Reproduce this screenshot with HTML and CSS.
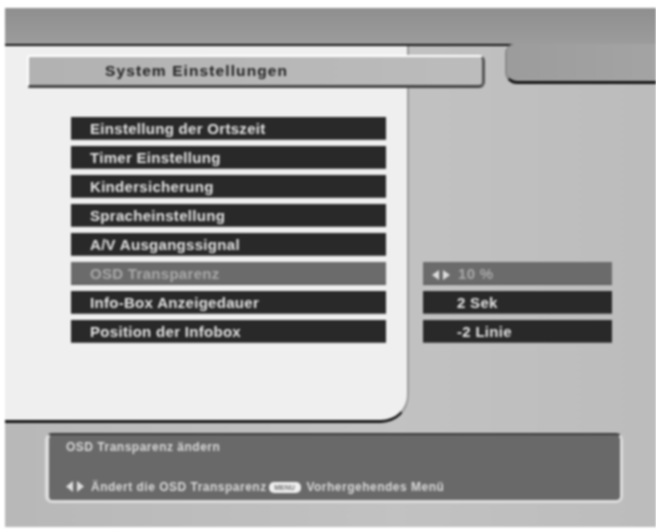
FILE: index.html
```html
<!DOCTYPE html>
<html lang="de">
<head>
<meta charset="utf-8">
<title>System Einstellungen</title>
<link rel="stylesheet" href="styles.css">
</head>
<body>
<div class="screen">
  <div class="top"></div>
  <div class="mid">
    <div class="panel">
      <div class="title"><span>System Einstellungen</span></div>
      <ul class="menu">
        <li class="row">Einstellung der Ortszeit</li>
        <li class="row">Timer Einstellung</li>
        <li class="row">Kindersicherung</li>
        <li class="row">Spracheinstellung</li>
        <li class="row">A/V Ausgangssignal</li>
        <li class="row sel">OSD Transparenz</li>
        <li class="row">Info-Box Anzeigedauer</li>
        <li class="row">Position der Infobox</li>
      </ul>
    </div>
    <div class="side">
      <div class="tab"></div>
      <ul class="vals">
        <li class="row val sel"><svg class="arrows" width="18" height="10" viewBox="0 0 18 10"><path d="M7 0v10L0 5zM11 0v10l7-5z"/></svg>10 %</li>
        <li class="row val"><span class="v">2 Sek</span></li>
        <li class="row val"><span class="v">-2 Linie</span></li>
      </ul>
    </div>
  </div>
  <div class="help">
    <p class="l1">OSD Transparenz ändern</p>
    <p class="l2"><svg class="arrows small" width="18" height="11" viewBox="0 0 18 11"><path d="M7 0v11L0 5.5zM11 0v11l7-5.5z"/></svg>Ändert die OSD Transparenz <span class="badge">MENU</span> Vorhergehendes Menü</p>
  </div>
</div>
</body>
</html>
```
FILE: styles.css
```css
* { box-sizing: border-box; }
html, body { margin: 0; padding: 0; background: #fff; }
body { width: 656px; height: 529px; overflow: hidden; font-family: "Liberation Sans", Arial, sans-serif; }
ul { list-style: none; margin: 0; padding: 0; }
p { margin: 0; }
.screen { margin: 8px 0 0 5px; width: 651px; height: 519px; background: linear-gradient(90deg, #b8b8b8, #c2c2c2 60%, #bcbcbc); filter: blur(.8px); display: flex; flex-direction: column; }
.top { height: 38px; background: linear-gradient(180deg, #8f8f8f, #9c9c9c); border-bottom: 2px solid #141414; flex: none; }
.mid { display: flex; height: 377px; flex: none; }
.panel { width: 404px; background: #efefef; border-bottom: 3px solid #141414; border-right: 2px solid #9a9a9a; border-bottom-right-radius: 28px; padding: 9px 0 0 22px; }
.title { width: 458px; height: 33px; background: linear-gradient(90deg, #b2b2b2, #bcbcbc); border: 2px solid #fff; border-bottom: 3px solid #444; border-right: 3px solid #555; border-radius: 3px 6px 6px 3px; position: relative; color: #222; font-size: 15.5px; font-weight: bold; letter-spacing: 1.1px; line-height: 28px; padding-left: 76px; white-space: nowrap; }
.menu { margin: 29px 0 0 44px; }
.row { height: 23px; margin-bottom: 6px; width: 315px; background: #292929; color: #e2e2e2; font-size: 15px; font-weight: bold; line-height: 24px; padding-left: 19px; letter-spacing: .3px; white-space: nowrap; border-bottom: 1px solid #555; }
.row.sel { background: #6b6b6b; color: #a9a9a9; }
.side { flex: 1; position: relative; }
.tab { height: 40px; margin: -2px 0 0 96px; position: relative; background: linear-gradient(90deg, #9c9c9c, #a4a4a4); border-bottom: 3px solid #141414; border-left: 2px solid #8a8a8a; border-radius: 9px 0 0 12px; }
.vals { margin: 178px 0 0 14px; }
.row.val { width: 189px; padding-left: 9px; }
.val .v { margin-left: 25px; }
.arrows { fill: #ddd; margin-right: 8px; vertical-align: -1px; }
.arrows.small { margin-right: 7px; }
.help { margin: 10px 0 0 40px; width: 578px; height: 70px; background: #696969; border: 3px solid #dcdcdc; border-left-width: 4px; border-top: 2px solid #3a3a3a; border-radius: 7px; color: #d8d8d8; font-size: 12px; font-weight: bold; padding: 4px 0 0 17px; letter-spacing: .5px; white-space: nowrap; }
.l1 { line-height: 16px; }
.l2 { margin-top: 24px; line-height: 16px; }
.badge { display: inline-block; background: #efefef; color: #777; font-size: 7px; letter-spacing: 0; line-height: 11px; height: 11px; width: 32px; text-align: center; border-radius: 5px; vertical-align: 1px; margin: 0 2px 0 -2px; }
```
